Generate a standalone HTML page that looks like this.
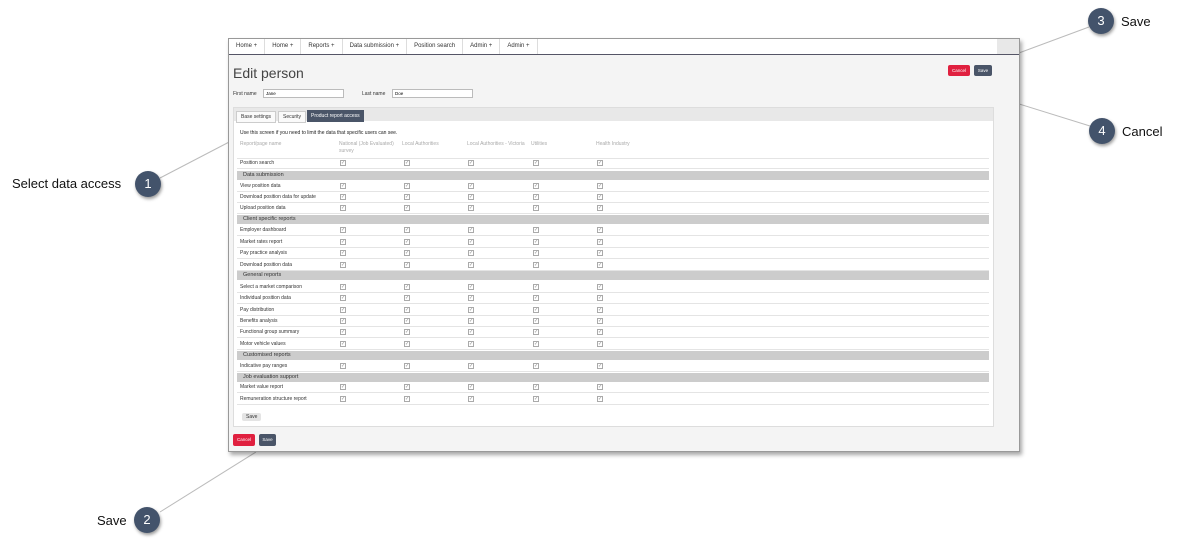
<!DOCTYPE html><html><head><style>
body{margin:0;width:1180px;height:545px;background:#fff;position:relative;font-family:"Liberation Sans",sans-serif;overflow:hidden}
.a{position:absolute}
.shot{left:228px;top:38px;width:792px;height:414px;background:#f4f4f4;border:1px solid #999;box-shadow:2px 3px 4px rgba(0,0,0,.35);box-sizing:border-box}
.nav{left:0;top:0;width:768px;height:15px;background:#fff;border-bottom:1px solid #556;font-size:6px;color:#333}
.nav span{display:inline-block;padding:0 7px;line-height:15px;border-right:1px solid #ddd}
.t{font-size:5px;color:#333;white-space:nowrap}
.sec{left:3px;width:752px;height:9px;background:#ccc;font-size:5.5px;color:#333;line-height:9px;padding-left:6px;box-sizing:border-box}
.ln{left:3px;width:752px;height:1px;background:#e4e4e4}
.cb{width:6px;height:6px;border:1px solid #aaa;box-sizing:border-box;font-size:5px;line-height:4px;color:#888;text-align:center}
.btn{color:#fff;font-size:4.5px;border-radius:2px;text-align:center}
.circ{width:26px;height:26px;border-radius:50%;background:#43536b;color:#fff;font-size:13px;text-align:center;line-height:26px;box-shadow:1px 2px 3px rgba(0,0,0,.4)}
.lab{font-size:13px;color:#111}
</style></head><body>
<svg class="a" style="left:0;top:0" width="1180" height="545"><g stroke="#bbb" stroke-width="1"><line x1="160" y1="178" x2="233" y2="140"/><line x1="160" y1="512" x2="256" y2="452"/><line x1="1089" y1="27" x2="1000" y2="60"/><line x1="1090" y1="126" x2="958" y2="85"/></g></svg>
<div class="a shot">
<div class="a nav"><span>Home +</span><span>Home +</span><span>Reports +</span><span>Data submission +</span><span>Position search</span><span>Admin +</span><span>Admin +</span></div>
<div class="a" style="left:768px;top:0;width:22px;height:15px;background:#e8e8e8;border-bottom:1px solid #556"></div>
<div class="a" style="left:4px;top:26px;font-size:14px;color:#444">Edit person</div>
<div class="a t" style="left:4px;top:52px">First name</div>
<div class="a" style="left:34px;top:50px;width:77px;height:7px;background:#fff;border:1px solid #bbb;font-size:4.5px;line-height:7px;padding-left:2px">Jane</div>
<div class="a t" style="left:133px;top:52px">Last name</div>
<div class="a" style="left:163px;top:50px;width:77px;height:7px;background:#fff;border:1px solid #bbb;font-size:4.5px;line-height:7px;padding-left:2px">Doe</div>
<div class="a btn" style="left:719px;top:26px;width:22px;height:11px;line-height:11px;background:#e0203f">Cancel</div>
<div class="a btn" style="left:745px;top:26px;width:18px;height:11px;line-height:11px;background:#4a5568">Save</div>
<div class="a" style="left:4px;top:68px;width:759px;height:318px;background:#fff;border:1px solid #ddd">
<div class="a" style="left:0;top:0;width:759px;height:13px;background:#e8e8e8"></div>
<div class="a t" style="left:2px;top:3px;padding:2px 4px;border:1px solid #ccc;background:#fafafa">Base settings</div>
<div class="a t" style="left:44px;top:3px;padding:2px 4px;border:1px solid #ccc;background:#fafafa">Security</div>
<div class="a t" style="left:73px;top:2px;padding:3px 4px;background:#4a5568;color:#fff">Product report access</div>
<div id="g"></div>
</div>
<div class="a btn" style="left:4px;top:395px;width:22px;height:12px;line-height:12px;background:#e0203f">Cancel</div>
<div class="a btn" style="left:30px;top:395px;width:17px;height:12px;line-height:12px;background:#4a5568">Save</div>
</div>
<div class="a circ" style="left:135px;top:171px">1</div><div class="a lab" style="left:12px;top:176px">Select data access</div>
<div class="a circ" style="left:134px;top:507px">2</div><div class="a lab" style="left:97px;top:513px">Save</div>
<div class="a circ" style="left:1088px;top:8px">3</div><div class="a lab" style="left:1121px;top:14px">Save</div>
<div class="a circ" style="left:1089px;top:118px">4</div><div class="a lab" style="left:1122px;top:124px">Cancel</div>
<script>
var g=document.getElementById('g'),h='';
var ox=233,oy=106;
h+='<div class="a t" style="left:6px;top:22px;color:#222">Use this screen if you need to limit the data that specific users can see.</div>';
var hd=[[6,'Report/page name'],[105,'National (Job Evaluated)<br>survey'],[168,'Local Authorities'],[233,'Local Authorities - Victoria'],[297,'Utilities'],[362,'Health Industry']];
hd.forEach(function(x){h+='<div class="a t" style="left:'+x[0]+'px;top:33px;color:#aaa;line-height:7px">'+x[1]+'</div>'});
h+='<div class="ln a" style="top:50px"></div>';
var rows=[[161,'Position search'],[173,'#Data submission'],[184,'View position data'],[195,'Download position data for update'],[206,'Upload position data'],[217,'#Client specific reports'],[228,'Employer dashboard'],[240,'Market rates report'],[251,'Pay practice analysis'],[263,'Download position data'],[273,'#General reports'],[285,'Select a market comparison'],[296,'Individual position data'],[308,'Pay distribution'],[319,'Benefits analysis'],[330,'Functional group summary'],[342,'Motor vehicle values'],[353,'#Customised reports'],[364,'Indicative pay ranges'],[375,'#Job evaluation support'],[385,'Market value report'],[397,'Remuneration structure report']];
rows.forEach(function(r){var y=r[0]-oy;
if(r[1][0]=='#'){h+='<div class="a sec" style="top:'+(y-4.5)+'px">'+r[1].slice(1)+'</div>';}
else{h+='<div class="a t" style="left:6px;top:'+(y-3)+'px">'+r[1]+'</div>';
[341,405,469,534,598].forEach(function(x){h+='<div class="a cb" style="left:'+(x-ox-2)+'px;top:'+(y-3)+'px">&#10003;</div>'});
h+='<div class="ln a" style="top:'+(y+5)+'px"></div>';}});
h+='<div class="a t" style="left:8px;top:305px;padding:1px 4px;background:#e4e4e4;border-radius:2px">Save</div>';
g.innerHTML=h;
</script>
</body></html>
